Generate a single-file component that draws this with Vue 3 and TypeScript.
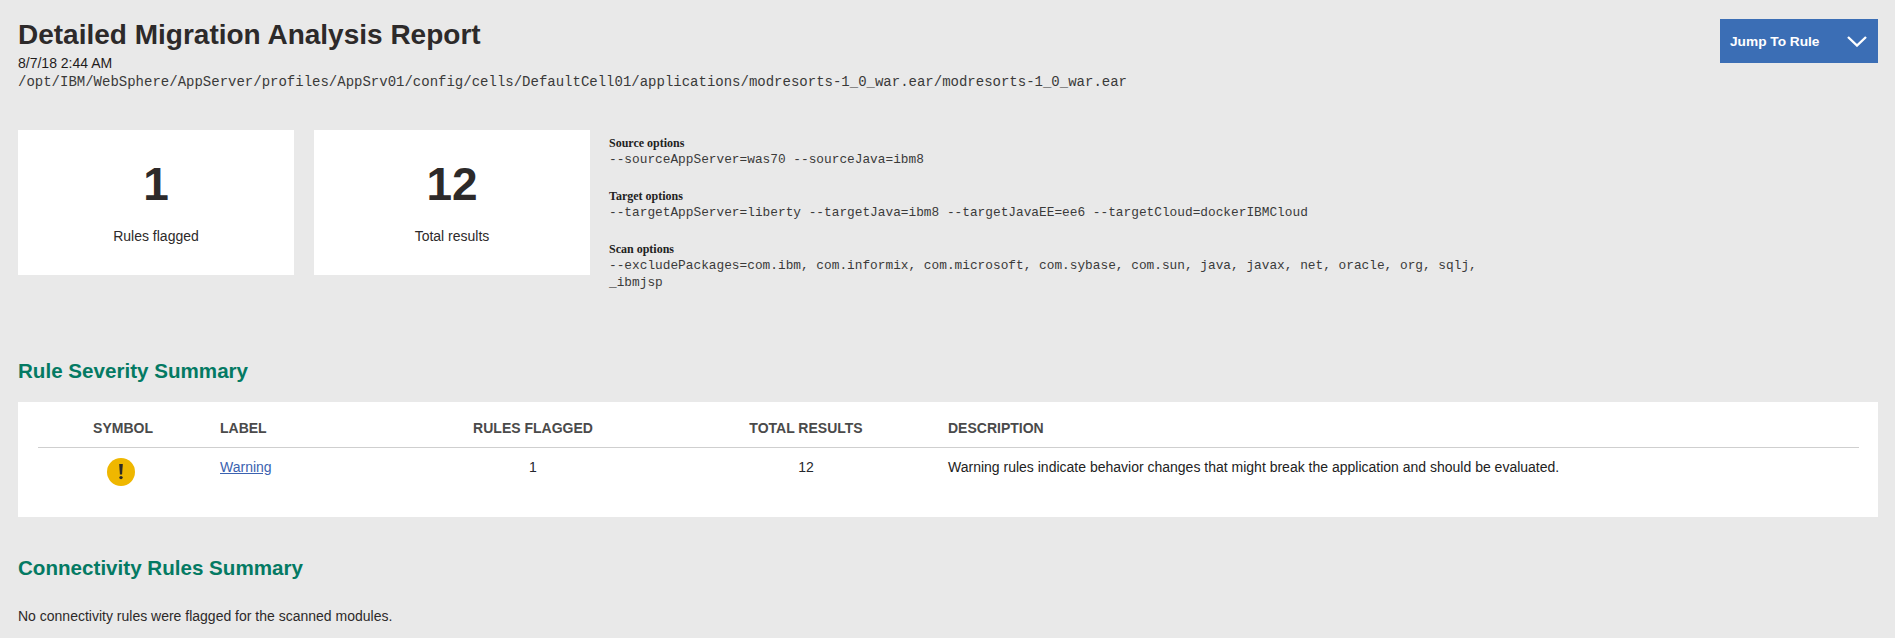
<script setup lang="ts">
interface OptionGroup { title: string; lines: string }
const groups: OptionGroup[] = [
  { title: 'Source options', lines: '--sourceAppServer=was70 --sourceJava=ibm8' },
  { title: 'Target options', lines: '--targetAppServer=liberty --targetJava=ibm8 --targetJavaEE=ee6 --targetCloud=dockerIBMCloud' },
  { title: 'Scan options', lines: '--excludePackages=com.ibm, com.informix, com.microsoft, com.sybase, com.sun, java, javax, net, oracle, org, sqlj, _ibmjsp' },
]
</script>

<template>
  <div class="page">
    <header class="head">
      <div>
        <h1>Detailed Migration Analysis Report</h1>
        <div class="date">8/7/18 2:44 AM</div>
        <div class="path">/opt/IBM/WebSphere/AppServer/profiles/AppSrv01/config/cells/DefaultCell01/applications/modresorts-1_0_war.ear/modresorts-1_0_war.ear</div>
      </div>
      <button class="jump" type="button">
        <span>Jump To Rule</span>
        <svg width="20" height="11" viewBox="0 0 20 11" fill="none"><path d="M1 1l9 8.5L19 1" stroke="#fff" stroke-width="2.4"/></svg>
      </button>
    </header>

    <section class="overview">
      <div class="card"><div class="num">1</div><div class="cap">Rules flagged</div></div>
      <div class="card"><div class="num">12</div><div class="cap">Total results</div></div>
      <div class="options">
        <div v-for="g in groups" :key="g.title" class="group">
          <div class="gtitle">{{ g.title }}</div>
          <div class="glines">{{ g.lines }}</div>
        </div>
      </div>
    </section>

    <h2 class="sev">Rule Severity Summary</h2>
    <div class="panel">
      <table>
        <colgroup>
          <col class="col-symbol" /><col class="col-label" /><col class="col-rules" /><col class="col-total" /><col />
        </colgroup>
        <thead>
          <tr>
            <th class="c">SYMBOL</th><th>LABEL</th><th class="c">RULES FLAGGED</th><th class="c">TOTAL RESULTS</th><th>DESCRIPTION</th>
          </tr>
        </thead>
        <tbody>
          <tr>
            <td class="c">
              <svg class="warn" width="28" height="28" viewBox="0 0 28 28"><circle cx="14" cy="14" r="14" fill="#efb700"/><path d="M12.2 6h3.6l-.7 10.5h-2.2z" fill="#2d2a26"/><circle cx="14" cy="19.6" r="1.7" fill="#2d2a26"/></svg>
            </td>
            <td><a href="#">Warning</a></td>
            <td class="c">1</td>
            <td class="c">12</td>
            <td>Warning rules indicate behavior changes that might break the application and should be evaluated.</td>
          </tr>
        </tbody>
      </table>
    </div>

    <h2 class="conn">Connectivity Rules Summary</h2>
    <p class="none">No connectivity rules were flagged for the scanned modules.</p>
  </div>
</template>

<style>
html, body { margin: 0; background: #e9e9e9; }
</style>

<style scoped>
.page {
  height: 638px;
  box-sizing: border-box;
  padding: 18px 17px 0 18px;
  overflow: hidden;
  background: #e9e9e9;
  color: #2d2a2a;
  font-family: "Liberation Sans", Arial, sans-serif;
  font-size: 14px;
}
.head { display: flex; justify-content: space-between; align-items: flex-start; }
h1 { margin: 0; font-size: 28px; line-height: 33px; font-weight: 700; }
.date { margin-top: 4px; font-size: 14px; line-height: 16px; color: #1f1c1c; }
.path { font-family: "Liberation Mono", monospace; font-size: 14px; line-height: 17px; margin-top: 3px; color: #3a3a3a; }
.jump {
  display: flex; align-items: center; justify-content: space-between;
  width: 158px; height: 44px; margin-top: 1px; padding: 0 11px 0 10px; border: 0;
  background: #3b6eb5; color: #fff;
  font-family: "Liberation Sans", Arial, sans-serif; font-size: 13.7px; font-weight: 700;
}
.overview { display: flex; gap: 20px; margin-top: 39px; }
.card { width: 276px; height: 145px; background: #fff; text-align: center; }
.num { margin-top: 31px; font-size: 46px; line-height: 46px; font-weight: 700; }
.cap { margin-top: 20px; font-size: 14px; line-height: 18px; }
.options { margin-left: -1px; width: 880px; padding-top: 6px; }
.group { margin-bottom: 21px; }
.group:last-child { margin-bottom: 0; }
.gtitle { font-family: "Liberation Serif", serif; font-weight: 700; font-size: 12px; line-height: 14px; color: #222; }
.glines { font-family: "Liberation Mono", monospace; font-size: 12.8px; line-height: 17px; margin-top: 1px; color: #3a3a3a; }
h2 { margin: 0; font-size: 20.6px; line-height: 26px; font-weight: 700; color: #047a63; }
.sev { margin-top: 67px; }
.panel { margin-top: 18px; height: 115px; background: #fff; padding: 0 19px 0 20px; box-sizing: border-box; }
table { width: 100%; table-layout: fixed; border-collapse: collapse; }
.col-symbol { width: 170px; }
.col-label { width: 182px; }
.col-rules { width: 286px; }
.col-total { width: 260px; }
th {
  height: 45px; padding: 7px 12px 0; box-sizing: border-box; text-align: left; font-size: 14px; font-weight: 700;
  color: #4a4a4a; border-bottom: 1px solid #cfcfcf;
}
td { padding: 10px 12px 0; vertical-align: top; font-size: 14px; line-height: 18px; color: #222; }
.c { text-align: center; }
td.c { color: #26282e; }
.warn { display: block; margin: 0 auto; transform: translateX(-2px); }
a { color: #3b62b0; }
.conn { margin-top: 38px; }
.none { margin: 26px 0 0; font-size: 14px; line-height: 18px; }
</style>
